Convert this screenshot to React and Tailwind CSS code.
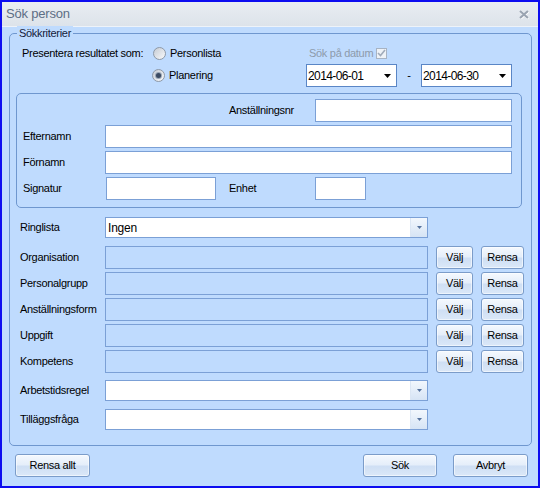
import React from "react";

const btnBg =
  "bg-[linear-gradient(to_bottom,#f5f9fe_0%,#e5eefa_46%,#cfdff4_54%,#dbe8f8_100%)]";

function Btn({ w, children }) {
  return (
    <div
      className={`${w} h-[23px] shrink-0 rounded-[3px] border border-[#7b9cc9] ${btnBg} shadow-[inset_0_0_0_1px_rgba(255,255,255,0.55)] flex items-center justify-center text-[11px] text-black`}
    >
      {children}
    </div>
  );
}

function Input({ w, h = "h-[23px]", disabled }) {
  return (
    <div
      className={`${w} ${h} shrink-0 border border-[#7ba0d6] ${
        disabled ? "bg-[#bfdbfe]" : "bg-white"
      }`}
    />
  );
}

function Combo({ text }) {
  return (
    <div className="w-[323px] h-[21px] shrink-0 border border-[#7ba0d6] bg-white flex">
      <div className="flex-1 flex items-center pl-[2px] text-[12px] tracking-[-0.2px] text-black">
        {text}
      </div>
      <div className="w-[17px] h-full border-l border-[#dbe6f4] bg-[linear-gradient(to_bottom,#f2f7fd,#d6e4f5)] flex items-center justify-center">
        <svg width="5" height="3" viewBox="0 0 5 3">
          <polygon points="0,0 5,0 2.5,3" fill="#56739e" />
        </svg>
      </div>
    </div>
  );
}

function DateSel({ text }) {
  return (
    <div className="w-[91px] h-[23px] shrink-0 border border-[#5a86c6] bg-white flex items-center">
      <div className="flex-1 pl-[1px] text-[12px] tracking-[-0.6px] text-black">{text}</div>
      <svg width="7" height="4" viewBox="0 0 7 4" className="mr-[5px]">
        <polygon points="0,0 7,0 3.5,4" fill="#000" />
      </svg>
    </div>
  );
}

function Radio({ checked }) {
  return (
    <span className="w-[13px] h-[13px] shrink-0 rounded-full border border-[#8e99a7] bg-[linear-gradient(135deg,#c6ccd4,#f8f9fb)] flex items-center justify-center">
      {checked && (
        <span className="w-[5px] h-[5px] rounded-full bg-[#3a4a62] shadow-[0_0_0_1px_#9aa6b6]" />
      )}
    </span>
  );
}

function Row({ label, children, mt = "mt-[3px]", h = "h-[23px]" }) {
  return (
    <div className={`${mt} ${h} flex items-center pl-[10px] shrink-0`}>
      <div className="w-[85px] shrink-0">{label}</div>
      {children}
    </div>
  );
}

export default function App() {
  const pick = ["Organisation", "Personalgrupp", "Anställningsform", "Uppgift", "Kompetens"];
  return (
    <div className="w-[540px] h-[488px] border-2 border-[#0c0cf0] bg-[#bfdbfe] flex flex-col overflow-hidden font-['Liberation_Sans',Arial,sans-serif] text-[11px] tracking-[-0.3px] text-black">
      {/* Title bar */}
      <div className="h-[25px] shrink-0 flex items-center justify-between pl-[4px] pr-[9px] bg-[linear-gradient(to_bottom,#e9edf2,#dde3ea)] border-b border-[#eef3f9]">
        <span className="text-[13px] tracking-[-0.2px] text-[#5d6e85]">Sök person</span>
        <svg width="10" height="9" viewBox="0 0 10 9">
          <path d="M1 1 L9 8 M9 1 L1 8" stroke="#ffffff" strokeWidth="2.6" transform="translate(0.5,0.5)" />
          <path d="M1 1 L9 8 M9 1 L1 8" stroke="#9aa4b1" strokeWidth="2.2" />
        </svg>
      </div>

      {/* Group box */}
      <div className="relative ml-[7px] mt-[6px] w-[523px] h-[413px] shrink-0 border border-[#6f97cf] rounded-[5px] flex flex-col">
        <span className="absolute left-[7px] top-[-8px] px-[2px] bg-[#bfdbfe] leading-[14px] text-[11px] text-[#14203a]">
          Sökkriterier
        </span>

        {/* Row A */}
        <div className="mt-[11px] h-[16px] flex items-center pl-[12px] shrink-0">
          <div className="w-[131px] shrink-0">Presentera resultatet som:</div>
          <div className="w-[156px] shrink-0 flex items-center">
            <Radio />
            <span className="ml-[4px]">Personlista</span>
          </div>
          <span className="text-[#8d9aab]">Sök på datum</span>
          <span className="ml-[3px] w-[11px] h-[11px] border border-[#a7b3c3] bg-[#eef2f7] flex items-center justify-center">
            <svg width="9" height="8" viewBox="0 0 9 8">
              <path d="M1 4 L3.5 6.5 L8 1" stroke="#a0abba" strokeWidth="1.6" fill="none" />
            </svg>
          </span>
        </div>

        {/* Row B */}
        <div className="mt-[3px] h-[23px] flex items-center pl-[142px] shrink-0">
          <div className="w-[154px] shrink-0 flex items-center">
            <Radio checked />
            <span className="ml-[4px]">Planering</span>
          </div>
          <DateSel text="2014-06-01" />
          <div className="w-[24px] shrink-0 text-center">-</div>
          <DateSel text="2014-06-30" />
        </div>

        {/* Inner panel */}
        <div className="mt-[6px] ml-[6px] w-[506px] h-[115px] shrink-0 border border-[#6f97cf] rounded-[5px] flex flex-col pt-[5px]">
          <div className="h-[23px] flex items-center pl-[212px]">
            <div className="w-[86px] shrink-0">Anställningsnr</div>
            <Input w="w-[197px]" />
          </div>
          <div className="mt-[3px] h-[23px] flex items-center pl-[6px]">
            <div className="w-[82px] shrink-0">Efternamn</div>
            <Input w="w-[407px]" />
          </div>
          <div className="mt-[3px] h-[23px] flex items-center pl-[6px]">
            <div className="w-[82px] shrink-0">Förnamn</div>
            <Input w="w-[407px]" />
          </div>
          <div className="mt-[3px] h-[23px] flex items-center pl-[6px]">
            <div className="w-[83px] shrink-0">Signatur</div>
            <Input w="w-[110px]" />
            <div className="ml-[13px] w-[86px] shrink-0">Enhet</div>
            <Input w="w-[51px]" />
          </div>
        </div>

        <Row label="Ringlista" mt="mt-[9px]" h="h-[21px]">
          <Combo text="Ingen" />
        </Row>

        {pick.map((l, i) => (
          <Row key={l} label={l} mt={i === 0 ? "mt-[8px]" : "mt-[3px]"}>
            <Input w="w-[323px]" disabled />
            <div className="ml-[8px]">
              <Btn w="w-[37px]">Välj</Btn>
            </div>
            <div className="ml-[8px]">
              <Btn w="w-[43px]">Rensa</Btn>
            </div>
          </Row>
        ))}

        <Row label="Arbetstidsregel" mt="mt-[7px]" h="h-[21px]">
          <Combo text="" />
        </Row>
        <Row label="Tilläggsfråga" mt="mt-[8px]" h="h-[21px]">
          <Combo text="" />
        </Row>
      </div>

      {/* Bottom buttons */}
      <div className="mt-[8px] flex items-center pl-[13px] pr-[10px] shrink-0">
        <Btn w="w-[75px]">Rensa allt</Btn>
        <div className="ml-auto">
          <Btn w="w-[74px]">Sök</Btn>
        </div>
        <div className="ml-[16px]">
          <Btn w="w-[75px]">Avbryt</Btn>
        </div>
      </div>
    </div>
  );
}
